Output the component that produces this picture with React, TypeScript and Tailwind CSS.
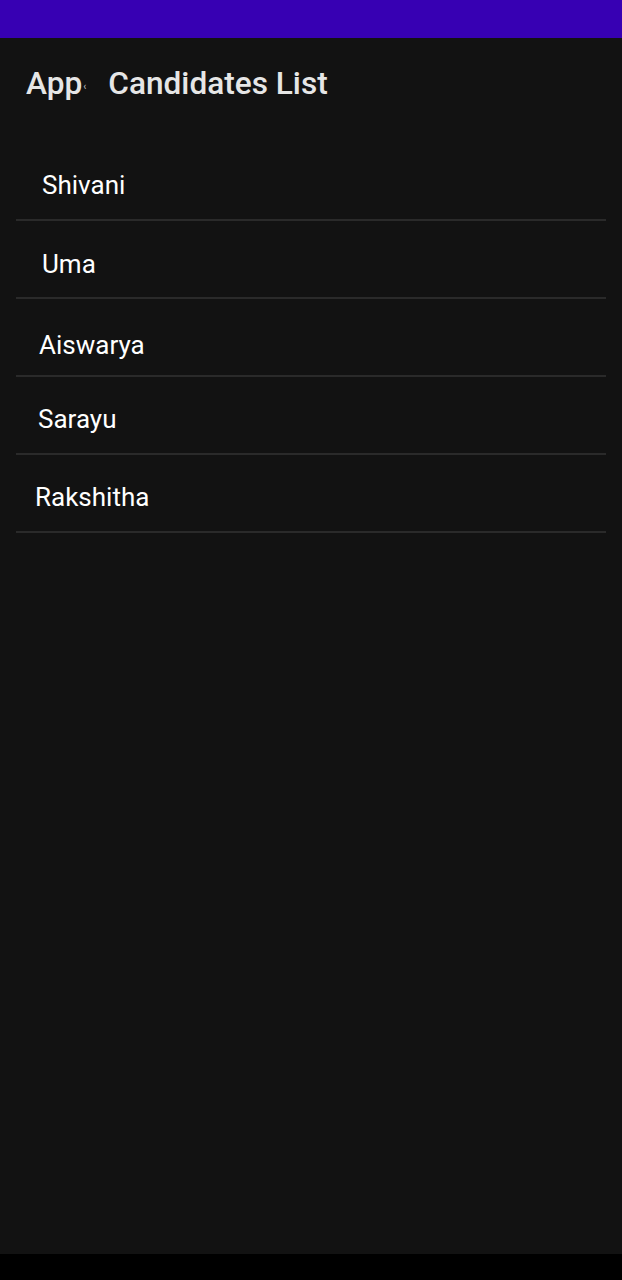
const candidates = [
  { name: 'Shivani', pl: 'pl-[26px]', pt: 'pt-[27px]' },
  { name: 'Uma', pl: 'pl-[26px]', pt: 'pt-[28px]' },
  { name: 'Aiswarya', pl: 'pl-[23px]', pt: 'pt-[31px]' },
  { name: 'Sarayu', pl: 'pl-[22px]', pt: 'pt-[27px]' },
  { name: 'Rakshitha', pl: 'pl-[19px]', pt: 'pt-[27px]' },
];

export default function App() {
  return (
    <div className="w-[622px] h-[1280px] flex flex-col bg-black" style={{ fontFamily: 'Roboto, "Noto Sans", sans-serif' }}>
      <div className="h-[38px] bg-[#3700b3] shrink-0" />
      <div className="flex-1 bg-[#121212] flex flex-col">
        <div className="h-[105px] flex items-center pl-[26px] pb-[14px] text-[#e6e6e6] text-[31.6px] font-medium">
          <span>App</span>
          <span className="text-[10px] ml-[1px] mt-[6px] text-[#bbbbbb]">‹</span>
          <span className="ml-[22px]">Candidates List</span>
        </div>
        <div className="px-4">
          {candidates.map((c) => (
            <div key={c.name} className="h-[78px] flex flex-col justify-between">
              <div className={`${c.pl} ${c.pt} text-white text-[26px] leading-[30px]`}>{c.name}</div>
              <div className="h-[2px] bg-[#2a2a2a]" />
            </div>
          ))}
        </div>
      </div>
      <div className="h-[26px] bg-black shrink-0" />
    </div>
  );
}
